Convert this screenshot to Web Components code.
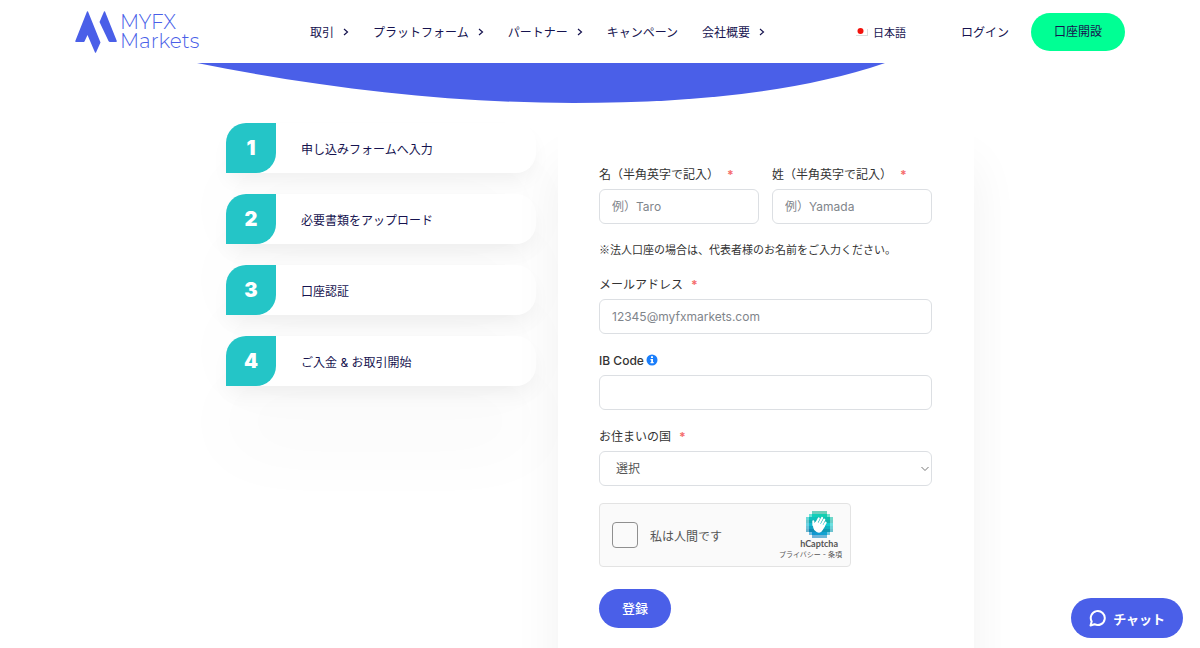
<!DOCTYPE html>
<html lang="ja">
<head>
<meta charset="utf-8">
<title>MYFX Markets</title>
<style>
  body {
    margin: 0;
    background: #fff;
    color: #16134f;
    font-family: Inter, "Noto Sans CJK JP", sans-serif;
    font-size: 12px;
    overflow-x: hidden;
  }
</style>
</head>
<body>
<site-header></site-header>
<main>
  <hero-curve></hero-curve>
  <signup-layout>
    <step-list slot="steps">
      <step-card number="1">申し込みフォームへ入力</step-card>
      <step-card number="2">必要書類をアップロード</step-card>
      <step-card number="3">口座認証</step-card>
      <step-card number="4">ご入金 &amp; お取引開始</step-card>
    </step-list>
    <signup-form slot="form"></signup-form>
  </signup-layout>
</main>
<chat-button>チャット</chat-button>

<script>
//small helper, every element puts its markup in an open shadow root
function render(el, html) {
  const template = document.createElement('template');
  template.innerHTML = html;
  el.attachShadow({ mode: 'open' });
  el.shadowRoot.appendChild(template.content.cloneNode(true));
}

class BrandLogo extends HTMLElement {
  constructor() {
    super();
    render(this, `
      <style>
        :host { display: block; }
        a {
          display: flex;
          align-items: center;
          gap: 3px;
          color: #4a5fe8;
          text-decoration: none;
          font: 300 20px/19px Montserrat, Lato, sans-serif;
        }
        svg, span { display: block; }
      </style>
      <a href="#">
        <svg width="42" height="42" viewBox="0 0 42 42" fill="#4a5fe8">
          <path d="M12 0.500Q12.500 0 13 0.500L25.500 31.500L21 41.500Q20.500 42 20 41.500L12.500 24L9.500 30.500Q9 31 8 31H1Q0 31 0.300 30Z"/>
          <path d="M29 0.500Q29.500 0 30 0.500L41.800 30Q42 31 41 31H35Q34 31 33.500 30L24.500 11Z"/>
        </svg>
        <div><span>MYFX</span><span>Markets</span></div>
      </a>
    `);
  }
}
customElements.define('brand-logo', BrandLogo);

class NavItem extends HTMLElement {
  constructor() {
    super();
    const arrow = this.hasAttribute('menu')
      ? `<svg width="6" height="8" viewBox="0 0 6 8" fill="none" stroke="currentColor" stroke-width="1.200"><path d="M1 1L4.500 4L1 7"/></svg>`
      : '';
    render(this, `
      <style>
        :host { display: block; }
        a {
          display: flex;
          align-items: center;
          gap: 9px;
          color: inherit;
          text-decoration: none;
          white-space: nowrap;
        }
      </style>
      <a href="#"><slot></slot>${arrow}</a>
    `);
  }
}
customElements.define('nav-item', NavItem);

class SiteHeader extends HTMLElement {
  constructor() {
    super();
    render(this, `
      <style>
        :host { display: block; background: #fff; }
        header {
          display: flex;
          align-items: center;
          max-width: 1050px;
          height: 63px;
          margin: 0 auto;
        }
        brand-logo { width: 125px; }
        nav { display: flex; gap: 24px; margin-left: 110px; }
        .actions { display: flex; align-items: center; margin-left: auto; }
        .actions a {
          color: inherit;
          text-decoration: none;
          white-space: nowrap;
        }
        .lang { display: flex; align-items: center; gap: 5px; font-size: 11px; }
        .login { margin: 0 22px 0 55px; }
        .open {
          background: #00ff94;
          border-radius: 20px;
          line-height: 38px;
          padding: 0 23px;
        }
      </style>
      <header>
        <brand-logo></brand-logo>
        <nav>
          <nav-item menu>取引</nav-item>
          <nav-item menu>プラットフォーム</nav-item>
          <nav-item menu>パートナー</nav-item>
          <nav-item>キャンペーン</nav-item>
          <nav-item menu>会社概要</nav-item>
        </nav>
        <div class="actions">
          <a class="lang" href="#">
            <svg width="12" height="9" viewBox="0 0 12 9"><path d="M0 8.500H12M11.500 2V9" stroke="#ddd"/><circle cx="4.500" cy="4" r="3" fill="#f3120c"/></svg>
            日本語
          </a>
          <a class="login" href="#">ログイン</a>
          <a class="open" href="#">口座開設</a>
        </div>
      </header>
    `);
  }
}
customElements.define('site-header', SiteHeader);

class HeroCurve extends HTMLElement {
  constructor() {
    super();
    render(this, `
      <style>
        :host { display: block; max-width: 806px; margin: 0 auto; }
        svg { display: block; }
      </style>
      <svg width="688" height="40" viewBox="0 0 688 40"><path d="M0 0C130 26 260 40 376 40S600 30 688 0Z" fill="#4a5fe8"/></svg>
    `);
  }
}
customElements.define('hero-curve', HeroCurve);

class SignupLayout extends HTMLElement {
  constructor() {
    super();
    render(this, `
      <style>
        :host {
          display: grid;
          grid-template-columns: 310px 1fr;
          gap: 22px;
          max-width: 748px;
          margin: 20px auto 0;
        }
      </style>
      <slot name="steps"></slot>
      <slot name="form"></slot>
    `);
  }
}
customElements.define('signup-layout', SignupLayout);

class StepList extends HTMLElement {
  constructor() {
    super();
    render(this, `
      <style>
        :host { display: flex; flex-direction: column; gap: 21px; }
      </style>
      <slot></slot>
    `);
  }
}
customElements.define('step-list', StepList);

class StepCard extends HTMLElement {
  constructor() {
    super();
    render(this, `
      <style>
        :host {
          display: flex;
          align-items: center;
          gap: 25px;
          height: 50px;
          background: #fff;
          border-radius: 20px 20px 20px 0;
          box-shadow: 0 10px 20px -4px rgba(0, 0, 0, .06), 0 60px 80px rgba(0, 0, 0, .03);
        }
        b {
          width: 50px;
          line-height: 50px;
          text-align: center;
          background: #24c5c7;
          border-radius: 20px 0 20px 0;
          color: #fff;
          font-size: 20px;
          font-weight: 900;
        }
      </style>
      <b></b>
      <span><slot></slot></span>
    `);
    this.shadowRoot.querySelector('b').innerText = this.getAttribute('number');
  }
}
customElements.define('step-card', StepCard);

//label with its control; type="select" gives a drop-down
class FormField extends HTMLElement {
  constructor() {
    super();
    const isSelect = this.getAttribute('type') === 'select';
    const control = isSelect
      ? `<div class="select"><select id="control"><option>選択</option></select>
         <svg width="8" height="6" viewBox="0 0 8 6" fill="none" stroke="#777"><path d="M0.500 1L4 4.500L7.500 1"/></svg></div>`
      : `<input id="control" type="text">`;
    render(this, `
      <style>
        :host { display: block; min-width: 0; }
        label {
          display: block;
          color: #333;
          line-height: 20px;
          margin-bottom: 4px;
          white-space: nowrap;
        }
        i { color: #f56c6c; font-style: normal; font-weight: 700; margin-left: 8px; }
        input, select {
          display: block;
          box-sizing: border-box;
          width: 100%;
          height: 35px;
          padding: 0 12px;
          border: 1px solid #dcdfe3;
          border-radius: 6px;
          background: #fff;
          color: #555;
          font: inherit;
        }
        select { appearance: none; padding: 0 16px; }
        input::placeholder { color: #7f858b; opacity: 1; }
        .select { display: grid; align-items: center; }
        .select > * { grid-area: 1 / 1; }
        .select svg { justify-self: end; margin-right: 3px; }
      </style>
      <label for="control"><slot></slot>${this.hasAttribute('required') ? '<i>*</i>' : ''}</label>
      ${control}
    `);
    if (!isSelect) {
      this.shadowRoot.querySelector('input').placeholder = this.getAttribute('placeholder') || '';
    }
  }
}
customElements.define('form-field', FormField);

class CaptchaBox extends HTMLElement {
  constructor() {
    super();
    //pixel badge: rows of a circle cut into squares, teal on top and blue below
    const rows = [[2, 5], [1, 7], [0, 9], [0, 9], [0, 9], [0, 9], [0, 9], [1, 7], [2, 5]];
    let pixels = '';
    rows.forEach(([start, count], y) => {
      for (let x = start; x < start + count; x++) {
        const edge = x === start || x === start + count - 1 || y === 0 || y === 8;
        const hue = 172 + y * 4 - x;
        const light = 38 + (x * 3 + y * 5) % 3 * 3;
        pixels += `<rect x="${x * 3}" y="${y * 3}" width="3" height="3" fill="hsl(${hue} 85% ${light}%)" opacity="${edge ? 0.6 : 1}"/>`;
      }
    });
    render(this, `
      <style>
        :host {
          display: flex;
          box-sizing: border-box;
          align-items: center;
          justify-content: space-between;
          width: 252px;
          height: 64px;
          padding: 0 8px 0 12px;
          background: #fafafa;
          border: 1px solid #e3e3e3;
          border-radius: 4px;
          color: #555;
        }
        label { display: flex; align-items: center; gap: 12px; }
        input {
          appearance: none;
          width: 26px;
          height: 26px;
          margin: 0;
          border: 1px solid #8f8f8f;
          border-radius: 4px;
          background: #fafafa;
        }
        .brand { display: flex; flex-direction: column; align-items: flex-end; }
        .mark { display: flex; flex-direction: column; align-items: center; margin-right: 4px; }
        .mark svg { display: block; }
        b { font-size: 9px; line-height: 12px; font-family: Lato, sans-serif; }
        small { font-size: 7px; line-height: 10px; white-space: nowrap; }
        small a { color: inherit; text-decoration: none; }
      </style>
      <label><input type="checkbox">私は人間です</label>
      <div class="brand">
        <div class="mark">
          <svg width="27" height="27" viewBox="0 0 27 27">
            <g shape-rendering="crispEdges">${pixels}</g>
            <g transform="rotate(28 13.500 13.500)">
              <path d="M10 14V8.500M12.700 13V6.500M15.400 13V7M18 14V9M8.500 17L6.500 13.500" fill="none" stroke="#fff" stroke-linecap="round" stroke-width="2.100"/>
              <path d="M9 12.500H19V16.500Q19 21.500 14.500 21.500Q11 21.500 9.300 19L7.500 16.500Z" fill="#fff"/>
            </g>
          </svg>
          <b>hCaptcha</b>
        </div>
        <small><a href="#">プライバシー</a> - <a href="#">条項</a></small>
      </div>
    `);
  }
}
customElements.define('captcha-box', CaptchaBox);

class SignupForm extends HTMLElement {
  constructor() {
    super();
    render(this, `
      <style>
        :host {
          display: block;
          background: #fff;
          border-radius: 12px;
          padding: 42px 42px 42px 41px;
          box-shadow: 0 40px 50px rgba(0, 0, 0, .06);
        }
        form { display: flex; flex-direction: column; gap: 17px; }
        .names { display: grid; grid-template-columns: 1fr 1fr; gap: 13px; }
        p {
          margin: 0;
          color: #333;
          font-family: "Noto Sans CJK JP", sans-serif;
          font-size: 11px;
          line-height: 17px;
        }
        .code { font-weight: 500; }
        .info { display: inline-block; vertical-align: -1px; margin-left: 2px; }
        button {
          align-self: flex-start;
          margin-top: 5px;
          padding: 0 23px;
          border: 0;
          border-radius: 20px;
          background: #4a5fe8;
          color: #fff;
          font: inherit;
          font-size: 13px;
          font-weight: 500;
          line-height: 39px;
        }
      </style>
      <form>
        <div class="names">
          <form-field placeholder="例）Taro" required>名（半角英字で記入）</form-field>
          <form-field placeholder="例）Yamada" required>姓（半角英字で記入）</form-field>
        </div>
        <p>※法人口座の場合は、代表者様のお名前をご入力ください。</p>
        <form-field placeholder="12345@myfxmarkets.com" required>メールアドレス</form-field>
        <form-field class="code">IB Code<svg class="info" width="12" height="12" viewBox="0 0 12 12"><circle cx="6" cy="6" r="5.500" fill="#1a7efb"/><path d="M5 2.300h2v1.600H5zM4.500 5h2.500v3h.7v1.300H4.500V8h.7V6.300h-.7z" fill="#fff"/></svg></form-field>
        <form-field type="select" required>お住まいの国</form-field>
        <captcha-box></captcha-box>
        <button type="button">登録</button>
      </form>
    `);
  }
}
customElements.define('signup-form', SignupForm);

class ChatButton extends HTMLElement {
  constructor() {
    super();
    render(this, `
      <style>
        :host { display: block; position: fixed; right: 17px; bottom: 10px; }
        button {
          display: flex;
          align-items: center;
          gap: 7px;
          height: 40px;
          padding: 0 18px;
          border: 0;
          border-radius: 20px;
          background: #4a5fe8;
          color: #fff;
          font: inherit;
          font-size: 13px;
          font-weight: 700;
        }
      </style>
      <button type="button">
        <svg width="17" height="18" viewBox="0 0 17 18" fill="none" stroke="#fff" stroke-width="2" stroke-linejoin="round"><path d="M1.500 16.500L2.700 12.500A7 7 0 1 1 5.500 15.200Z"/></svg>
        <slot></slot>
      </button>
    `);
  }
}
customElements.define('chat-button', ChatButton);
</script>
</body>
</html>
